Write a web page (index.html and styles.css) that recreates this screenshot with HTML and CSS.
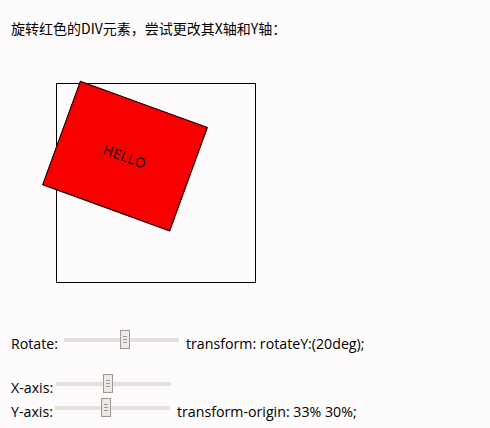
FILE: index.html
```html
<!DOCTYPE html>
<html lang="zh-CN">
<head>
<meta charset="utf-8">
<title>transform-origin</title>
<link rel="stylesheet" href="styles.css">
</head>
<body>
<p class="intro">旋转红色的DIV元素，尝试更改其X轴和Y轴：</p>
<div class="stage">
  <div class="box"><span class="hello">HELLO</span></div>
</div>
<div class="controls">
  <div class="row row-rotate"><span class="lbl lbl-rotate">Rotate:</span><input class="slider" type="range" min="0" max="1000" value="533"><span class="out">transform: rotateY:(20deg);</span></div>
  <div class="row row-x"><span class="lbl lbl-x">X-axis:</span><input class="slider" type="range" min="0" max="1000" value="448"></div>
  <div class="row row-y"><span class="lbl lbl-y">Y-axis:</span><input class="slider" type="range" min="0" max="1000" value="435"><span class="out">transform-origin: 33% 30%;</span></div>
</div>
</body>
</html>
```
FILE: styles.css
```css
html, body {
  margin: 0;
  background: #fdfbfc;
}
body {
  padding: 0 11px;
  font-family: "Noto Sans CJK SC", "Noto Sans", sans-serif;
  font-size: 14px;
  color: #000;
}
.intro {
  margin: 0;
  padding-top: 18px;
  line-height: 20px;
}
.stage {
  margin: 45px 0 0 45px;
  width: 178px;
  height: 178px;
  padding: 10px;
  border: 1px solid #000;
  position: relative;
}
.box {
  position: absolute;
  top: 9.5px;
  left: 9px;
  box-sizing: border-box;
  width: 136px;
  height: 111px;
  border: 1px solid #000;
  background: #f80000;
  transform: rotate(20deg);
  transform-origin: 33% 30%;
  display: flex;
  align-items: center;
  justify-content: center;
}
.hello {
  font-family: "Open Sans", sans-serif;
  font-size: 13.5px;
  letter-spacing: 0.6px;
  color: #000;
}
.controls {
  margin-top: 47px;
  font-family: "Open Sans", sans-serif;
  font-size: 14.2px;
}
.row {
  height: 24px;
  line-height: 24px;
  white-space: nowrap;
}
.row-rotate {
  margin-bottom: 20px;
}
.lbl {
  display: inline-block;
}
.lbl-rotate { width: 53px; }
.lbl-x { width: 45px; }
.lbl-y { width: 44px; }
.out {
  margin-left: 7px;
}
.slider {
  -webkit-appearance: none;
  appearance: none;
  width: 115px;
  height: 19px;
  margin: 0;
  padding: 0;
  background: transparent;
  vertical-align: baseline;
}
.slider::-webkit-slider-runnable-track {
  height: 4px;
  background: #e4e0db;
  border: none;
}
.slider::-webkit-slider-thumb {
  -webkit-appearance: none;
  appearance: none;
  box-sizing: border-box;
  width: 10px;
  height: 19px;
  margin-top: -7.5px;
  border: 1px solid #9d9893;
  background-color: #ece9e5;
  background-image:
    linear-gradient(#9d9893, #9d9893),
    linear-gradient(#9d9893, #9d9893),
    linear-gradient(#9d9893, #9d9893);
  background-size: 4px 1px;
  background-repeat: no-repeat;
  background-position: 2px 5px, 2px 8px, 2px 11px;
}
```
